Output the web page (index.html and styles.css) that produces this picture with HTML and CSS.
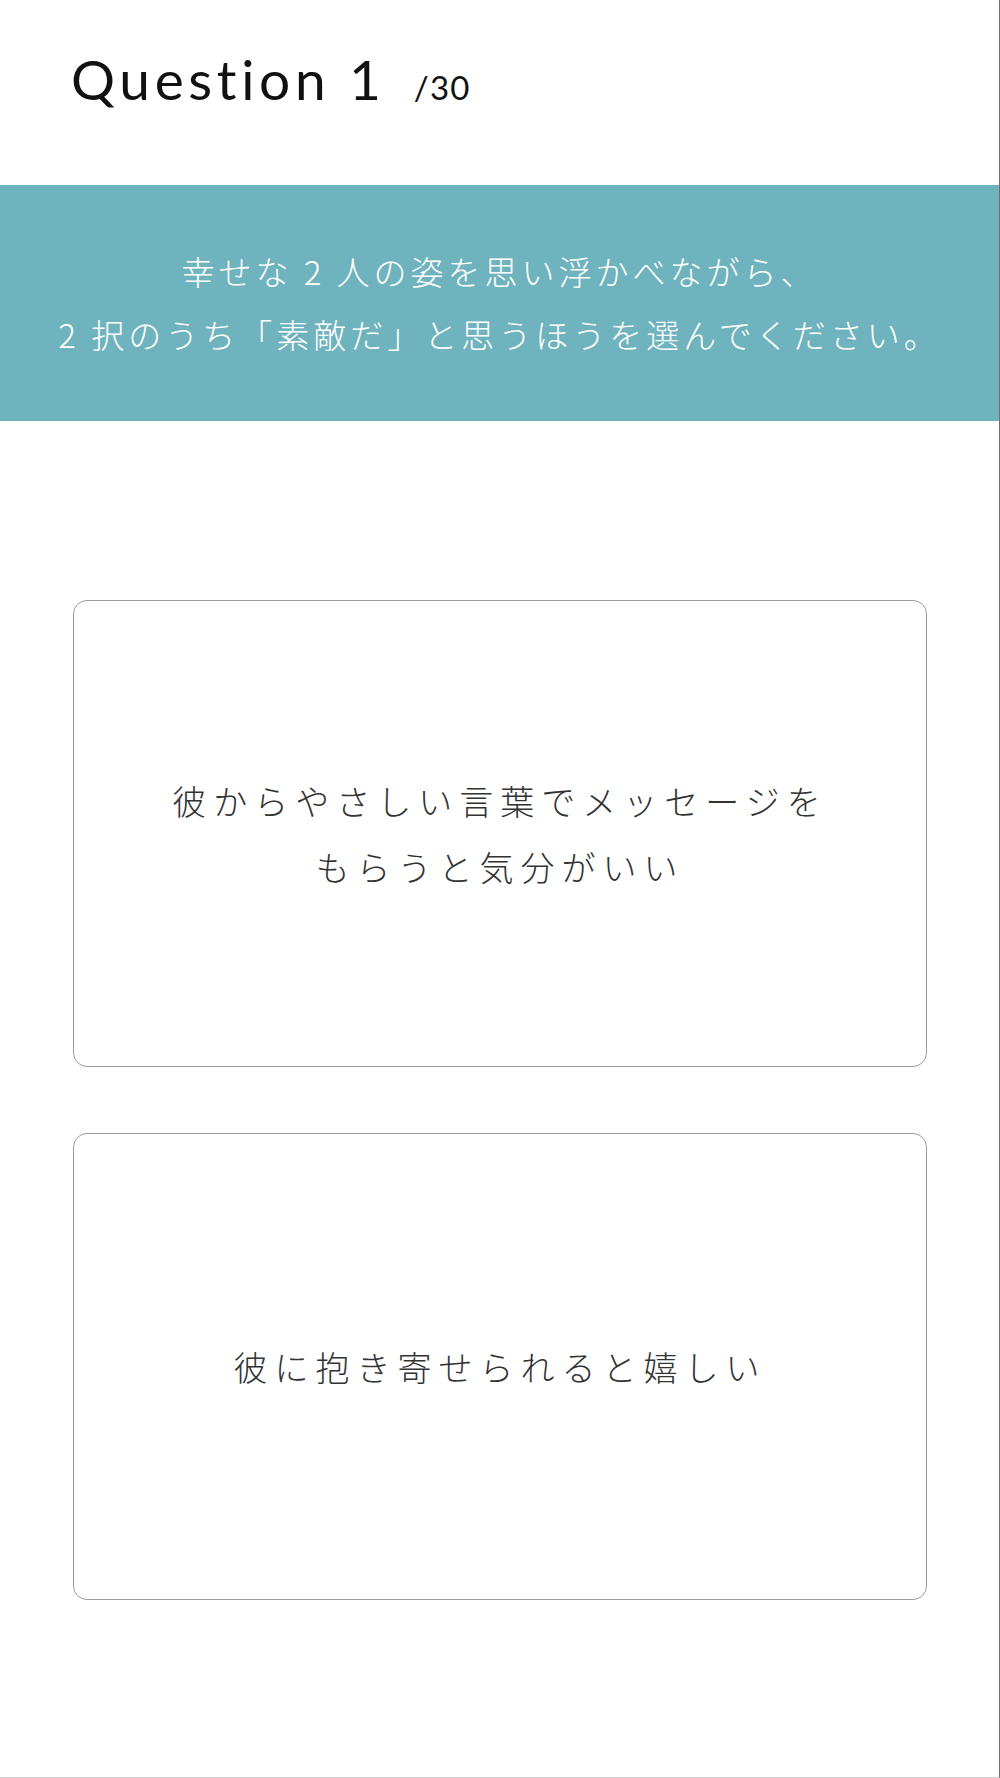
FILE: index.html
```html
<!DOCTYPE html>
<html lang="ja">
<head>
  <meta charset="UTF-8">
  <meta name="viewport" content="width=device-width, initial-scale=1.0">
  <title>Question 1 / 30</title>
  <link rel="stylesheet" href="styles.css">
</head>
<body>
  <div class="page">
    <header class="quiz-header">
      <h1 class="quiz-title">Question 1<span class="quiz-total">/30</span></h1>
    </header>

    <div class="instruction">
      <p>幸せな 2 人の姿を思い浮かべながら、</p>
      <p>2 択のうち「素敵だ」と思うほうを選んでください。</p>
    </div>

    <div class="choices">
      <button class="choice" data-choice="a">彼からやさしい言葉でメッセージを<br>もらうと気分がいい</button>
      <button class="choice" data-choice="b">彼に抱き寄せられると嬉しい</button>
    </div>
  </div>
</body>
</html>
```

FILE: styles.css
```css
* {
  margin: 0;
  padding: 0;
  box-sizing: border-box;
}

body {
  background: #fff;
  font-family: "Noto Sans CJK JP", "Noto Sans", sans-serif;
}

.page {
  width: 1000px;
  height: 1778px;
  border-right: 1px solid #6f6f6f;
  border-bottom: 1px solid #cfcfcf;
  background: #fff;
}

.quiz-header {
  height: 185px;
  padding: 52px 0 0 71px;
}

.quiz-title {
  font-family: Lato, "Noto Sans", sans-serif;
  font-weight: 400;
  font-size: 55px;
  line-height: 55px;
  letter-spacing: 0.085em;
  color: #111;
}

.quiz-total {
  font-size: 33px;
  letter-spacing: 0.04em;
  margin-left: 28px;
}

.instruction {
  height: 236px;
  background: #6fb3be;
  color: #fff;
  display: flex;
  flex-direction: column;
  justify-content: center;
  text-align: center;
  font-size: 33px;
  font-weight: 300;
  line-height: 63px;
  letter-spacing: 4px;
}

.choices {
  display: flex;
  flex-direction: column;
  gap: 66px;
  padding: 179px 72px 0 73px;
}

.choice {
  height: 467px;
  background: #fff;
  border: 1px solid #9a9a9a;
  border-radius: 14px;
  font-family: "Noto Sans CJK JP", sans-serif;
  font-size: 34px;
  font-weight: 300;
  line-height: 66px;
  letter-spacing: 7px;
  color: #333;
  cursor: pointer;
}
```
